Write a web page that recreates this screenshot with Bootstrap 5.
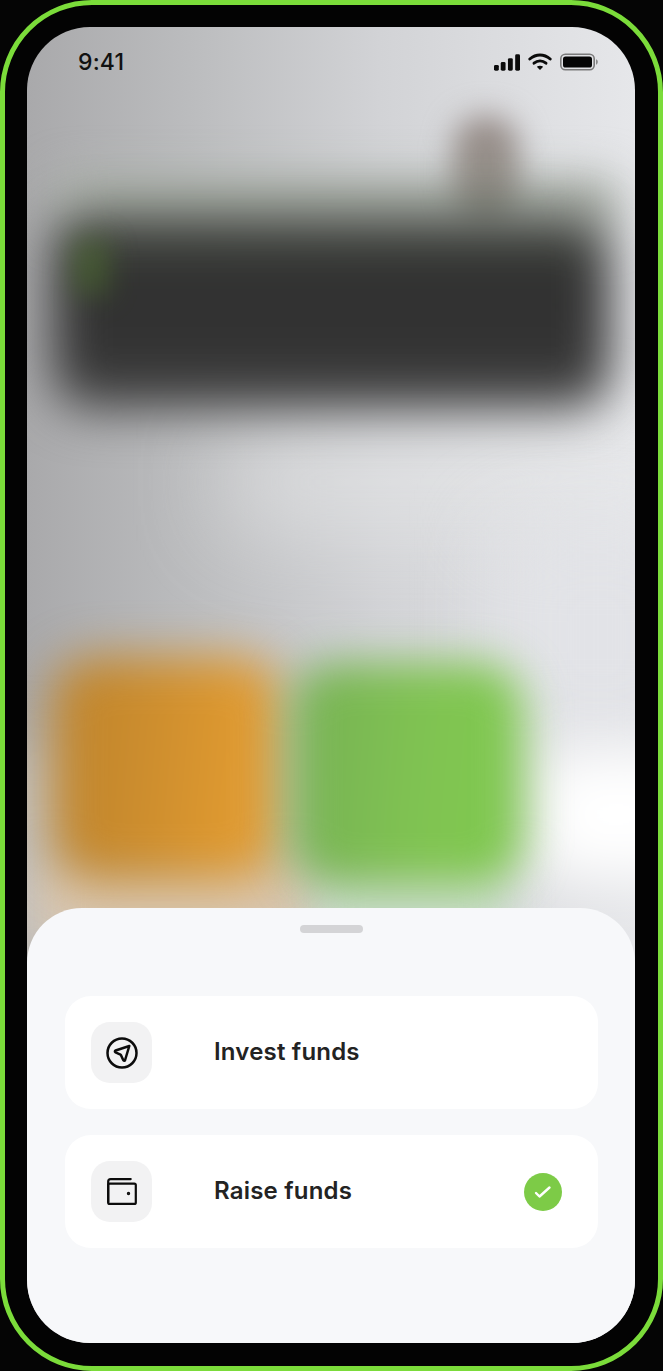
<!DOCTYPE html>
<html lang="en">
<head>
<meta charset="utf-8">
<title>Choose action</title>
<link href="https://cdn.jsdelivr.net/npm/bootstrap@5.3.0/dist/css/bootstrap.min.css" rel="stylesheet">
<style>
html,body{height:1371px;margin:0;background:#050505;overflow:hidden}
.phone-frame{width:663px;height:1371px;border:5px solid #7bdc3a;border-radius:92px;padding:22px 23px 23px 22px;background:#030303}
.phone-screen{height:100%;border-radius:63px;overflow:hidden;position:relative;background:linear-gradient(90deg,#a9a9ab 0%,#bcbdbf 28%,#d2d3d6 58%,#e6e7ea 100%)}
.backdrop{position:absolute;inset:0;overflow:hidden}
.blob{position:absolute;display:block}
.glow-band{left:200px;right:-60px;top:410px;height:90px;background:#e9eaeb;filter:blur(45px);opacity:.6}
.glow-left{left:-60px;width:150px;top:720px;height:220px;background:#c2c1bf;filter:blur(30px)}
.glow-right{left:470px;right:-60px;top:500px;height:220px;background:#e2e3e7;filter:blur(40px)}
.glow-white{left:510px;right:-60px;top:725px;height:125px;background:#fff;filter:blur(30px)}
.blob-head{left:426px;top:88px;width:66px;height:104px;border-radius:32px;background:linear-gradient(#9a8e8b,#8e8f86);filter:blur(15px)}
.blob-shade{left:30px;top:150px;width:560px;height:50px;background:#aeb4ac;filter:blur(22px)}
.blob-dark{left:26px;top:186px;width:558px;height:196px;border-radius:36px;background:linear-gradient(#4d5349 0,#303030 30%,#333 70%,#444 100%);filter:blur(25px)}
.blob-lime{left:46px;top:212px;width:36px;height:56px;background:#4c6e2c;filter:blur(14px);opacity:.55}
.blob-beige{left:10px;top:838px;width:280px;height:80px;background:#d8c6b0;filter:blur(20px)}
.blob-mint{left:290px;top:845px;width:190px;height:70px;background:#c8dcc8;filter:blur(20px)}
.blob-orange{left:24px;top:630px;width:232px;height:224px;border-radius:44px;background:linear-gradient(95deg,#c0852c 10%,#cc8d2e 40%,#e09a30 80%,#e2a23e 100%);filter:blur(24px)}
.blob-green{left:264px;top:636px;width:232px;height:222px;border-radius:44px;background:linear-gradient(95deg,#78b354 10%,#80c352 55%,#7fca4e 100%);filter:blur(22px)}
.status-row{position:relative;height:70px;padding:20px 37px 0 51px;font:500 23px/30px "Inter","Liberation Sans",sans-serif;color:#111;letter-spacing:.2px}
.status-icons{gap:8px;height:30px}
.bottom-sheet{position:relative;height:435px;background:#f7f8fa;border-radius:55px 55px 0 0;padding:17px 37px 0 38px}
.grab-handle{width:63px;height:8px;border-radius:4px;background:#d4d4d6;margin:0 auto 63px}
.option-tile{height:113px;background:#fff;border-radius:26px;padding:0 36px 0 26px}
.option-tile+.option-tile{margin-top:26px}
.icon-well{width:61px;height:61px;border-radius:19px;background:#f2f2f3;flex:none}
.option-label{margin-left:62px;padding-bottom:2px;font:600 24px/1 "Inter","Liberation Sans",sans-serif;color:#232323;letter-spacing:.2px}
.check-dot{width:38px;height:38px;border-radius:50%;background:#7dcb47}
</style>
</head>
<body>
<div class="phone-frame">
  <div class="phone-screen d-flex flex-column">
    <div class="backdrop" aria-hidden="true">
      <span class="blob glow-band"></span><span class="blob glow-right"></span><span class="blob glow-left"></span><span class="blob glow-white"></span>
      <span class="blob blob-shade"></span><span class="blob blob-head"></span><span class="blob blob-dark"></span><span class="blob blob-lime"></span>
      <span class="blob blob-beige"></span><span class="blob blob-mint"></span><span class="blob blob-orange"></span><span class="blob blob-green"></span>
    </div>
    <div class="status-row d-flex justify-content-between align-items-start flex-shrink-0">
      <span>9:41</span>
      <div class="status-icons d-flex align-items-center">
        <svg width="26" height="17" viewBox="0 0 27 17" fill="#0b0b0b"><rect x="0" y="11" width="5" height="6" rx="1.5"/><rect x="7" y="8" width="5" height="9" rx="1.5"/><rect x="14.5" y="4" width="5" height="13" rx="1.5"/><rect x="22" y="0" width="5" height="17" rx="1.5"/></svg>
        <svg width="24" height="18" viewBox="0 0 24 18" fill="none" stroke="#0b0b0b" stroke-width="2.9" stroke-linecap="round"><path d="M1.8 6C8 .6 16 .6 22.2 6"/><path d="M6 10.2c3.6-3 8.4-3 12 0"/><path d="M12 17l-3.2-3.2c1.9-1.5 4.5-1.5 6.400 0z" fill="#0b0b0b" stroke="none"/></svg>
        <svg width="38" height="18" viewBox="0 0 38 17"><rect x=".8" y=".8" width="33.400" height="15.400" rx="4.500" fill="none" stroke="#7b7b7b" stroke-width="1.600"/><rect x="3" y="3" width="29" height="11" rx="2.600" fill="#050505"/><path d="M36 5.800c1.300.5 1.800 1.500 1.800 2.700s-.5 2.200-1.800 2.700z" fill="#8a8a8a"/></svg>
      </div>
    </div>
    <div class="flex-grow-1"></div>
    <div class="bottom-sheet flex-shrink-0">
      <div class="grab-handle"></div>
      <div class="option-tile d-flex align-items-center">
        <div class="icon-well d-flex align-items-center justify-content-center">
          <svg width="32" height="32" viewBox="0 0 32 32" fill="none" stroke="#0c0c0c" stroke-width="2.500" stroke-linejoin="round"><circle cx="16" cy="16" r="14.500"/><path d="M23.300 9 9.600 13.500c-.9.300-1 1.500-.1 1.900l5 2.300c.2.100.3.200.4.400l2.300 5c.4.900 1.600.8 1.900-.1z"/></svg>
        </div>
        <span class="option-label">Invest funds</span>
      </div>
      <div class="option-tile d-flex align-items-center">
        <div class="icon-well d-flex align-items-center justify-content-center">
          <svg width="30" height="27" viewBox="0 0 30 27" fill="none" stroke="#0c0c0c" stroke-width="2.200" stroke-linecap="round" stroke-linejoin="round"><path d="M1.200 24V3.500C1.200 2 2.200 1.100 3.700 1.100h20"/><path d="M2.700 5.600h24.600c.9 0 1.500.6 1.500 1.500v17.300c0 .9-.6 1.500-1.500 1.500H2.700c-.9 0-1.500-.6-1.500-1.500V7.100c0-.9.600-1.500 1.500-1.500z"/><circle cx="21.500" cy="15.500" r=".6" fill="#0c0c0c"/></svg>
        </div>
        <span class="option-label">Raise funds</span>
        <div class="check-dot d-flex align-items-center justify-content-center ms-auto">
          <svg width="18" height="14" viewBox="0 0 18 14" fill="none" stroke="#fff" stroke-width="2.400" stroke-linecap="round" stroke-linejoin="round"><path d="M2 8l3.500 3.500L15.500 2.500"/></svg>
        </div>
      </div>
    </div>
  </div>
</div>
<script src="https://cdn.jsdelivr.net/npm/bootstrap@5.3.0/dist/js/bootstrap.bundle.min.js"></script>
</body>
</html>
